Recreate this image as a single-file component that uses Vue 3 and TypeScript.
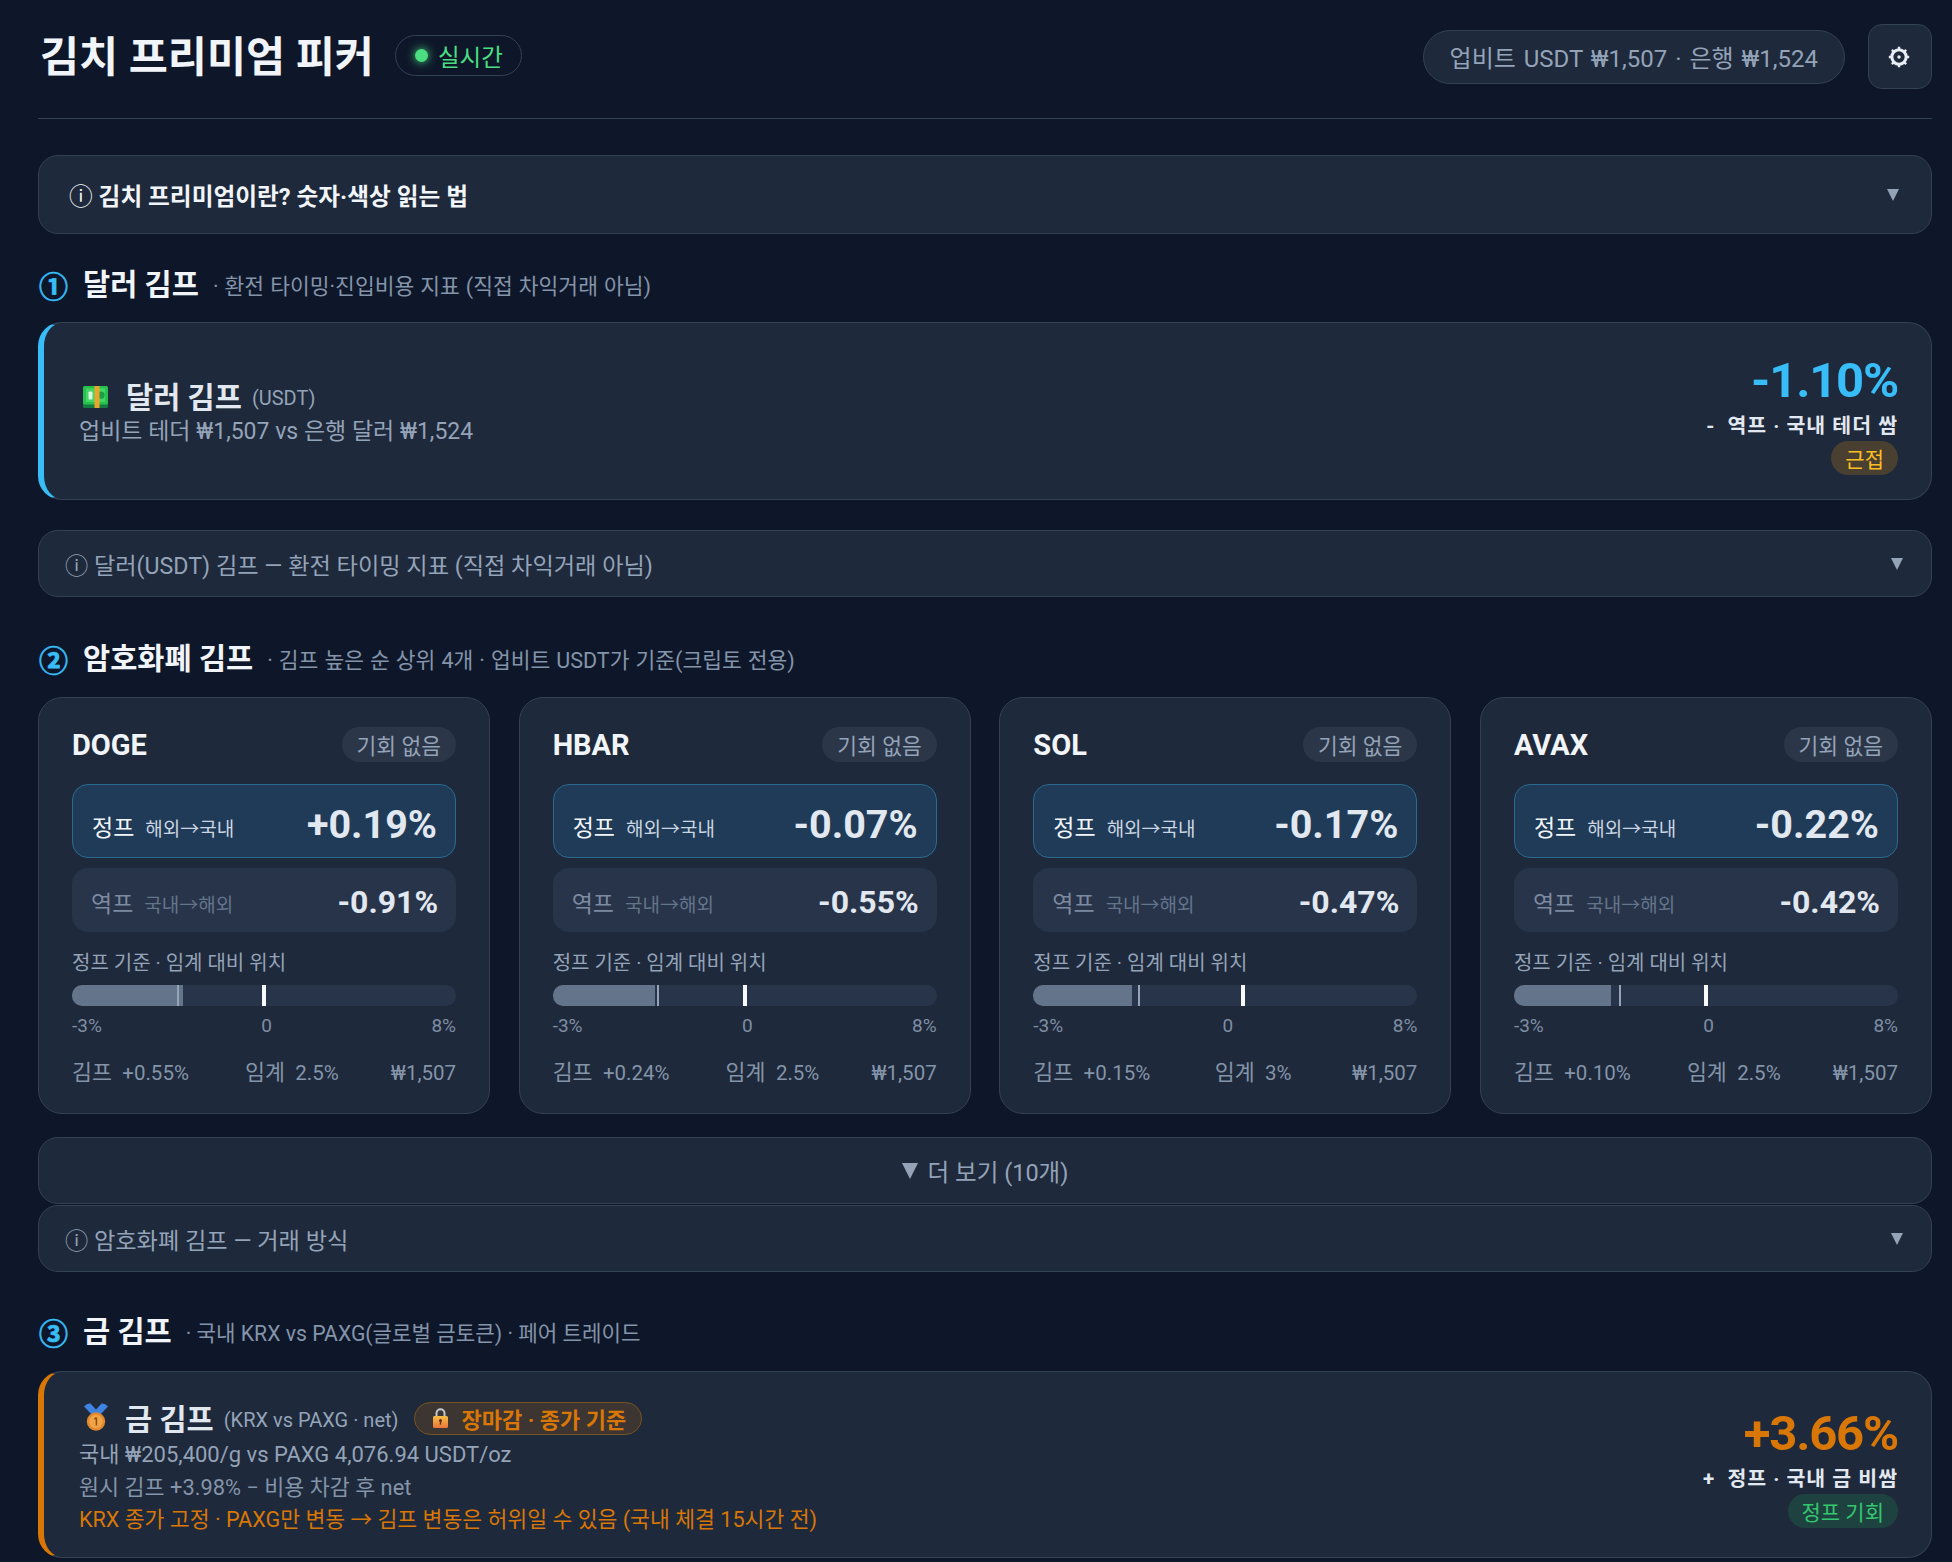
<script setup lang="ts">
interface Coin {
  name: string
  fwd: string
  rev: string
  fwdPct: number
  kimp: string
  limit: string
  limitPct: number
}

const RANGE_MIN = -3
const RANGE_SPAN = 11
const pos = (v: number): string => `${((v - RANGE_MIN) / RANGE_SPAN) * 100}%`

const coins: Coin[] = [
  { name: 'DOGE', fwd: '+0.19%', rev: '-0.91%', fwdPct: 0.19, kimp: '+0.55%', limit: '2.5%', limitPct: 2.5 },
  { name: 'HBAR', fwd: '-0.07%', rev: '-0.55%', fwdPct: -0.07, kimp: '+0.24%', limit: '2.5%', limitPct: 2.5 },
  { name: 'SOL', fwd: '-0.17%', rev: '-0.47%', fwdPct: -0.17, kimp: '+0.15%', limit: '3%', limitPct: 3 },
  { name: 'AVAX', fwd: '-0.22%', rev: '-0.42%', fwdPct: -0.22, kimp: '+0.10%', limit: '2.5%', limitPct: 2.5 },
]
</script>

<template>
  <div class="page">
    <header class="top">
      <div class="top-left">
        <h1 class="title">김치 프리미엄 피커</h1>
        <span class="live"><i class="live-dot"></i>실시간</span>
      </div>
      <div class="top-right">
        <span class="rate">업비트 USDT ₩1,507 · 은행 ₩1,524</span>
        <button class="gear" aria-label="설정">
          <svg width="26" height="26" viewBox="0 0 24 24" fill="none" stroke="#e8eef6" stroke-width="2.8">
            <circle cx="12" cy="12" r="6.6" />
            <circle cx="12" cy="12" r="1.6" fill="#e8eef6" stroke="none" />
            <path stroke-width="2.2" d="M12 2.6v2M12 19.4v2M2.6 12h2M19.4 12h2M5.4 5.4l1.4 1.4M17.2 17.2l1.4 1.4M5.4 18.6l1.4-1.4M17.2 6.8l1.4-1.4" />
          </svg>
        </button>
      </div>
    </header>

    <div class="acc acc-main">
      <span class="acc-label"><span class="info">ⓘ</span> 김치 프리미엄이란? 숫자·색상 읽는 법</span>
      <span class="caret"></span>
    </div>

    <div class="sec-head first">
      <span class="num">①</span><h2>달러 김프</h2><span class="sec-sub">· 환전 타이밍·진입비용 지표 (직접 차익거래 아님)</span>
    </div>

    <section class="hero hero-usd">
      <div class="hero-left">
        <div class="hero-title usd-title">
          <svg class="emoji" width="25" height="22" viewBox="0 0 25 22">
            <rect x="0" y="3" width="25" height="19" rx="1.5" fill="#157a3f" />
            <rect x="0" y="0" width="25" height="18.5" rx="1.5" fill="#27c24c" />
            <rect x="3" y="2.5" width="19" height="13.5" fill="#45d465" />
            <rect x="5.5" y="5.5" width="4" height="8" rx="1" fill="#d9f7dc" />
            <circle cx="18" cy="9.2" r="3.6" fill="#1f9d45" />
            <rect x="11.5" y="0" width="5" height="22" fill="#eba52f" />
          </svg>
          <strong>달러 김프</strong><small>(USDT)</small>
        </div>
        <div class="hero-line">업비트 테더 ₩1,507 vs 은행 달러 ₩1,524</div>
      </div>
      <div class="hero-right">
        <div class="hero-val blue">-1.10%</div>
        <div class="hero-dir">-&nbsp; 역프 · 국내 테더 쌈</div>
        <span class="tag tag-amber">근접</span>
      </div>
    </section>

    <div class="acc acc-sub gap-top">
      <span class="acc-label"><span class="info">ⓘ</span> 달러(USDT) 김프 — 환전 타이밍 지표 (직접 차익거래 아님)</span>
      <span class="caret"></span>
    </div>

    <div class="sec-head">
      <span class="num">②</span><h2>암호화폐 김프</h2><span class="sec-sub">· 김프 높은 순 상위 4개 · 업비트 USDT가 기준(크립토 전용)</span>
    </div>

    <div class="grid">
      <article v-for="c in coins" :key="c.name" class="card">
        <div class="card-head">
          <span class="coin">{{ c.name }}</span>
          <span class="chance">기회 없음</span>
        </div>
        <div class="row row-on">
          <span class="row-l"><b>정프</b><em>해외→국내</em></span>
          <span class="row-v">{{ c.fwd }}</span>
        </div>
        <div class="row row-off">
          <span class="row-l"><b>역프</b><em>국내→해외</em></span>
          <span class="row-v">{{ c.rev }}</span>
        </div>
        <div class="bar-title">정프 기준 · 임계 대비 위치</div>
        <div class="bar">
          <div class="bar-fill" :style="{ width: pos(c.fwdPct) }"></div>
          <i class="tick-zero" :style="{ left: pos(0) }"></i>
          <i class="tick-limit" :style="{ left: pos(c.limitPct) }"></i>
        </div>
        <div class="scale"><span>-3%</span><span>0</span><span>8%</span></div>
        <div class="foot">
          <span>김프 <small>{{ c.kimp }}</small></span>
          <span class="foot-mid">임계 <small>{{ c.limit }}</small></span>
          <span><small>₩1,507</small></span>
        </div>
      </article>
    </div>

    <button class="more"><span class="more-caret"></span> 더 보기 (10개)</button>
    <div class="acc acc-sub">
      <span class="acc-label"><span class="info">ⓘ</span> 암호화폐 김프 — 거래 방식</span>
      <span class="caret"></span>
    </div>

    <div class="sec-head third">
      <span class="num">③</span><h2>금 김프</h2><span class="sec-sub">· 국내 KRX vs PAXG(글로벌 금토큰) · 페어 트레이드</span>
    </div>

    <section class="hero hero-gold">
      <div class="hero-left">
        <div class="hero-title">
          <svg class="emoji medal" width="24" height="28" viewBox="0 0 24 28">
            <path d="M0 3.5Q3 0 6.5 0.5L12 6.5 17.5 0.5Q21 0 24 3.5L15 13H9z" fill="#3f83e0" />
            <circle cx="12" cy="18.5" r="9.2" fill="#e2892e" />
            <circle cx="12" cy="18.5" r="6.8" fill="#f0a445" />
            <path d="M12.4 14.6v8M10.4 16.2l2-1.6" stroke="#8a4e10" stroke-width="1.5" fill="none" />
          </svg>
          <strong>금 김프</strong><small>(KRX vs PAXG · net)</small>
          <span class="closed">
            <svg width="15" height="20" viewBox="0 0 15 20">
              <defs>
                <linearGradient id="lockBody" x1="0" y1="0" x2="0" y2="1">
                  <stop offset="0" stop-color="#f7bd45" />
                  <stop offset="1" stop-color="#e8753a" />
                </linearGradient>
              </defs>
              <path d="M3.5 9V5.2a4 4 0 0 1 8 0V9" fill="none" stroke="#c4c8d0" stroke-width="2" />
              <rect x="0" y="8" width="15" height="12" rx="1.5" fill="url(#lockBody)" />
              <circle cx="7.5" cy="12.6" r="1.5" fill="#5b2f14" />
              <rect x="6.8" y="12.6" width="1.4" height="4" fill="#5b2f14" />
            </svg>
            장마감 · 종가 기준
          </span>
        </div>
        <div class="hero-line">국내 ₩205,400/g vs PAXG 4,076.94 USDT/oz</div>
        <div class="hero-line2">원시 김프 +3.98% − 비용 차감 후 net</div>
        <div class="hero-warn">KRX 종가 고정 · PAXG만 변동 → 김프 변동은 허위일 수 있음 (국내 체결 15시간 전)</div>
      </div>
      <div class="hero-right">
        <div class="hero-val orange">+3.66%</div>
        <div class="hero-dir">+&nbsp; 정프 · 국내 금 비쌈</div>
        <span class="tag tag-green">정프 기회</span>
      </div>
    </section>
  </div>
</template>

<style scoped>
.page {
  box-sizing: border-box;
  height: 1562px;
  overflow: hidden;
  padding: 24px 20px 0 38px;
  font-family: Roboto, "Noto Sans CJK KR", sans-serif;
  color: #e2e8f0;
}
.top {
  display: flex;
  justify-content: space-between;
  align-items: center;
  height: 65px;
  padding-bottom: 29px;
  border-bottom: 1px solid #334155;
  box-sizing: content-box;
  margin-bottom: 36px;
}
.top-left, .top-right { display: flex; align-items: center; }
.top-left { gap: 21px; }
.top-right { gap: 23px; }
.title { margin: 2px 0 0 2px; font-size: 42.5px; font-weight: 700; color: #f1f5f9; line-height: 1.2; }
.live {
  display: inline-flex; align-items: center; gap: 10px;
  height: 41px; margin-top: -2px; padding: 0 18px 0 19px; box-sizing: border-box;
  border: 1px solid #334155; border-radius: 21px;
  color: #4ade80; font-size: 23.5px;
}
.live-dot {
  width: 13px; height: 13px; border-radius: 50%;
  background: #4ade80; box-shadow: 0 0 10px #4ade80;
}
.rate {
  display: inline-flex; align-items: center; height: 54px; padding: 0 26px;
  box-sizing: border-box; background: #1e293b; border: 1px solid #334155; border-radius: 27px;
  font-size: 24px; word-spacing: 2px; color: #94a3b8;
}
.gear {
  display: flex; align-items: center; justify-content: center;
  width: 64px; height: 65px; padding: 0 2px 0 0; box-sizing: border-box;
  background: #1e293b; border: 1px solid #334155; border-radius: 14px;
}
.acc {
  display: flex; align-items: center; justify-content: space-between; box-sizing: border-box;
  background: #1e293b; border: 1px solid #334155; border-radius: 20px;
}
.acc-main { height: 79px; padding: 0 32px 0 30px; font-size: 23.7px; font-weight: 700; color: #f1f5f9; }
.acc-sub { height: 67px; padding: 0 28px 0 26px; font-size: 23.2px; color: #94a3b8; }
.gap-top { margin-top: 30px; }
.info { font-weight: 400; }
.caret {
  width: 0; height: 0;
  border-left: 6.5px solid transparent; border-right: 6.5px solid transparent;
  border-top: 12px solid #94a3b8;
}
.sec-head {
  display: flex; align-items: center; height: 36px;
  margin: 33px 0 19px;
}
.sec-head:not(.first) { margin: 44px 0 20px; }
.sec-head.third { margin: 42px 0 21px; }
.num { font-size: 29px; color: #38bdf8; width: 45px; flex: none; font-weight: 700; -webkit-text-stroke: 0.7px #38bdf8; margin-left: 1px; margin-right: -1px; }
.sec-head h2 { margin: 0 0 6px; font-size: 29.5px; font-weight: 700; color: #f1f5f9; }
.sec-sub { margin: 0 0 2px 14px; font-size: 21.5px; word-spacing: 0.7px; color: #8494a9; }
.third .sec-sub { font-size: 21.2px; word-spacing: 0; }
.hero {
  display: flex; justify-content: space-between; align-items: center; box-sizing: border-box;
  background: #1e293b; border: 1px solid #334155; border-radius: 24px;
  padding: 4px 33px 0 35px;
}
.hero-usd { height: 178px; border-left: 6px solid #38bdf8; }
.hero-gold { height: 187px; border-left: 6px solid #d97706; padding-top: 3px; }
.hero-title { display: flex; align-items: center; height: 42px; }
.usd-title { height: 40px; margin-top: -2px; }
.emoji { flex: none; margin: 4px 18px 0 4px; }
.medal { margin: 0 17px 0 5px; }
.hero-title strong { font-size: 29.5px; font-weight: 700; color: #e2e8f0; }
.hero-title small { font-size: 20px; color: #94a3b8; margin-left: 10px; margin-top: 5px; }
.hero-line { font-size: 23px; line-height: 34px; color: #94a3b8; }
.hero-gold .hero-line { font-size: 22px; }
.hero-line2 { font-size: 21.8px; line-height: 32px; color: #8494a9; }
.hero-warn { font-size: 21.6px; line-height: 32px; color: #d97706; }
.closed {
  display: inline-flex; align-items: center; gap: 14px; height: 33px; box-sizing: border-box;
  margin: 2px 0 0 15px; padding: 0 15px 0 18px; border: 1px solid #7a5320; border-radius: 17px;
  background: rgba(217, 119, 6, 0.16); color: #d97706; font-size: 22px; font-weight: 700;
}
.hero-right { display: flex; flex-direction: column; align-items: flex-end; }
.hero-val { font-size: 49px; font-weight: 700; line-height: 60px; height: 60px; letter-spacing: -1.2px; }
.blue { color: #38bdf8; }
.orange { color: #d97706; }
.hero-dir { font-size: 20.5px; line-height: 30px; font-weight: 700; letter-spacing: 1px; color: #e2e8f0; }
.tag {
  display: inline-flex; align-items: center; height: 34px; padding: 0 14px; box-sizing: border-box;
  border-radius: 17px; font-size: 21px;
}
.tag-amber { background: rgba(245, 158, 11, 0.2); color: #fbbf24; }
.tag-green { background: rgba(34, 197, 94, 0.16); color: #34c76f; }
.grid { display: grid; grid-template-columns: repeat(4, 1fr); gap: 28.6px; }
.card {
  box-sizing: border-box; height: 417px; padding: 29px 33px 0;
  background: #1e293b; border: 1px solid #334155; border-radius: 24px;
}
.card-head { display: flex; justify-content: space-between; align-items: center; height: 35px; }
.coin { font-size: 29px; font-weight: 700; color: #f1f5f9; }
.chance {
  display: inline-flex; align-items: center; height: 35px; padding: 0 15px; box-sizing: border-box;
  background: #2b3648; border-radius: 18px; font-size: 21.5px; color: #94a3b8;
}
.row {
  display: flex; justify-content: space-between; align-items: center; box-sizing: border-box;
  padding: 0 18px 0 19px; border-radius: 16px;
}
.row-on { height: 74px; margin-top: 22px; background: #1f3b58; border: 1px solid #2b6a90; }
.row-off { height: 64px; margin-top: 10px; background: #28344a; }
.row-l { display: flex; align-items: baseline; gap: 11px; }
.row-on .row-l { margin-top: 10px; }
.row-off .row-l { margin-top: 4px; }
.row-l b { font-size: 23px; font-weight: 400; }
.row-l em { font-style: normal; font-size: 19px; }
.row-on .row-l { color: #cbd5e1; }
.row-on .row-l b { color: #f1f5f9; }
.row-off .row-l { color: #64748b; }
.row-off .row-l b { color: #7c8aa0; }
.row-v { font-weight: 700; color: #e2e8f0; }
.row-on .row-v { font-size: 39.5px; margin-top: 6px; }
.row-off .row-v { font-size: 32px; margin-top: 4px; }
.bar-title { margin-top: 17px; font-size: 20px; color: #94a3b8; line-height: 28px; }
.bar {
  position: relative; height: 21px; margin-top: 8px;
  background: #28344a; border-radius: 10px; overflow: hidden;
}
.bar-fill { height: 100%; background: #64748b; }
.tick-zero { position: absolute; top: 0; bottom: 0; width: 2px; background: #94a3b8; }
.tick-limit { position: absolute; top: 0; bottom: 0; width: 4px; margin-left: -2px; background: #f8fafc; }
.scale {
  display: flex; justify-content: space-between; margin-top: 8px;
  font-size: 19px; line-height: 24px; color: #7f8ea3;
}
.foot {
  display: flex; justify-content: space-between; margin-top: 20px;
  font-size: 21.7px; line-height: 30px; word-spacing: 5px; color: #8494a9;
}
.foot small { font-size: 20.5px; }
.foot-mid { margin-left: 4px; }
.more {
  display: flex; align-items: center; justify-content: center; gap: 10px;
  width: 100%; height: 67px; margin: 23px 0 1px; box-sizing: border-box;
  background: #1e293b; border: 1px solid #334155; border-radius: 20px;
  font: inherit; font-size: 23.5px; color: #94a3b8;
}
.more-caret {
  width: 0; height: 0;
  border-left: 8px solid transparent; border-right: 8px solid transparent;
  border-top: 16px solid #94a3b8;
}
</style>

<style>
html, body { margin: 0; background: #0e1729; }
</style>
